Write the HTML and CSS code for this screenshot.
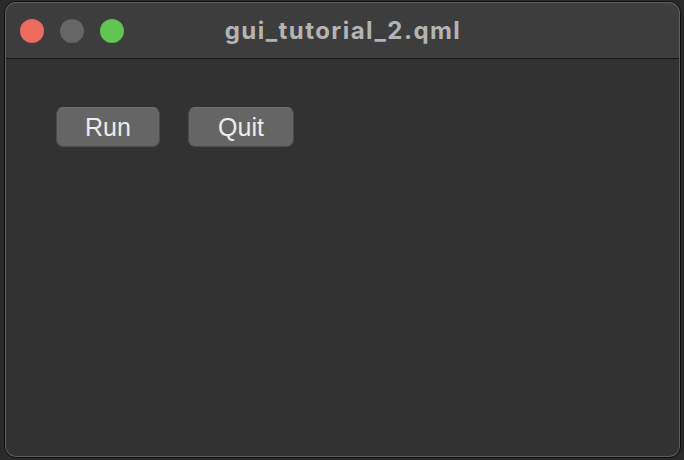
FILE: index.html
```html
<!DOCTYPE html>
<html>
<head>
<meta charset="utf-8">
<link rel="stylesheet" href="styles.css">
</head>
<body>
<div class="window">
  <div class="titlebar">
    <div class="lights">
      <span class="light red"></span>
      <span class="light gray"></span>
      <span class="light green"></span>
    </div>
    <div class="title">gui_tutorial_2.qml</div>
  </div>
  <div class="content">
    <button class="btn btn-run">Run</button>
    <button class="btn btn-quit">Quit</button>
  </div>
</div>
</body>
</html>
```
FILE: styles.css
```css
html, body {
  margin: 0;
  padding: 0;
  width: 684px;
  height: 460px;
  background: #2a2a2a;
  overflow: hidden;
}
.window {
  box-sizing: border-box;
  margin: 1px 3px 0 4px;
  width: 677px;
  height: 457px;
  border: 1px solid #0e0e0e;
  border-radius: 12px;
  overflow: hidden;
  display: flex;
  flex-direction: column;
  background: #323232;
  position: relative;
}
.window::after {
  content: "";
  position: absolute;
  inset: 0;
  border-radius: 11px;
  box-shadow: inset 0 0 0 1px #5e5e5e;
  pointer-events: none;
}
.titlebar {
  height: 56px;
  flex: none;
  background: #3d3d3d;
  border-bottom: 1px solid #161616;
  display: flex;
  align-items: center;
  position: relative;
}
.lights {
  display: flex;
  gap: 16px;
  padding-left: 15px;
  margin-top: 2px;
}
.light {
  width: 24px;
  height: 24px;
  border-radius: 50%;
  display: block;
}
.red { background: #ed6a5e; }
.gray { background: #666666; }
.green { background: #61c454; }
.title {
  position: absolute;
  left: 0;
  right: 0;
  top: 0;
  height: 56px;
  line-height: 58px;
  text-align: center;
  font-family: "Inter", "Liberation Sans", sans-serif;
  font-weight: 700;
  font-size: 24px;
  letter-spacing: 1.45px;
  color: #b4b4b4;
  padding-left: 1px;
}
.content {
  flex: 1;
  display: flex;
  align-items: flex-start;
  gap: 28px;
  padding: 48px 0 0 51px;
}
.btn {
  box-sizing: border-box;
  height: 40px;
  border: 1px solid #4a4a4a;
  border-top-color: #707070;
  border-radius: 7px;
  background: #656565;
  color: #ececec;
  font-family: "Liberation Sans", sans-serif;
  font-size: 25px;
  padding: 0;
  line-height: 35px;
}
.btn-run { width: 104px; }
.btn-quit { width: 106px; }
```
